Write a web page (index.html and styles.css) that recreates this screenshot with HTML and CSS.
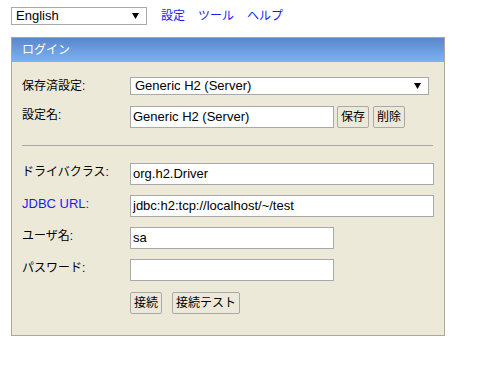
FILE: index.html
```html
<!DOCTYPE html>
<html lang="ja">
<head>
<meta charset="utf-8">
<title>H2 Console</title>
<link rel="stylesheet" href="styles.css">
</head>
<body>
<div class="page">
  <div class="topbar">
    <div class="select lang"><span class="select-text">English</span><svg class="caret" width="7" height="6" viewBox="0 0 7 6"><path d="M0 0H7L3.5 6Z"/></svg></div>
    <nav class="links">
      <a href="#" class="link">設定</a>
      <a href="#" class="link">ツール</a>
      <a href="#" class="link">ヘルプ</a>
    </nav>
  </div>
  <div class="panel">
    <div class="panel-head">ログイン</div>
    <div class="panel-body">
      <div class="label">保存済設定:</div>
      <div class="field first"><div class="select saved"><span class="select-text">Generic H2 (Server)</span><svg class="caret" width="7" height="6" viewBox="0 0 7 6"><path d="M0 0H7L3.5 6Z"/></svg></div></div>

      <div class="label">設定名:</div>
      <div class="field inline"><div class="input short">Generic H2 (Server)</div><button class="btn">保存</button><button class="btn">削除</button></div>

      <div class="sep"></div>

      <div class="label">ドライバクラス:</div>
      <div class="field"><div class="input long">org.h2.Driver</div></div>

      <div class="label jdbc">JDBC URL:</div>
      <div class="field"><div class="input long">jdbc:h2:tcp://localhost/~/test</div></div>

      <div class="label">ユーザ名:</div>
      <div class="field"><div class="input short">sa</div></div>

      <div class="label">パスワード:</div>
      <div class="field"><div class="input short"></div></div>

      <div class="label"></div>
      <div class="field actions"><button class="btn">接続</button><button class="btn">接続テスト</button></div>
    </div>
  </div>
</div>
</body>
</html>
```
FILE: styles.css
```css
html, body {
  margin: 0;
  padding: 0;
  background: #ffffff;
}
body {
  font-family: "Liberation Sans", Arial, "Noto Sans CJK JP", sans-serif;
  font-size: 12px;
  color: #000;
}
.page {
  padding: 7px 0 0 11px;
  width: 434px;
}
.topbar {
  display: flex;
  align-items: center;
  height: 18px;
}
.select {
  box-sizing: border-box;
  display: flex;
  align-items: center;
  justify-content: space-between;
  background: #fff;
  border: 1px solid #a9a9a9;
  height: 18px;
  padding: 0 7px 0 4px;
  line-height: 16px;
}
.select-text {
  font-size: 13px;
}
.lang {
  width: 136px;
  padding-left: 4px;
}
.caret {
  display: block;
  fill: #000;
}
.links {
  display: flex;
  margin-left: 14px;
  gap: 13px;
}
.link {
  color: #1a1aff;
  text-decoration: none;
  line-height: 18px;
}
.panel {
  margin-top: 12px;
  border: 1px solid #aca899;
  background: #ece9d8;
}
.panel-head {
  height: 24px;
  line-height: 24px;
  padding-left: 10px;
  color: #fff;
  background: linear-gradient(#5a86cc, #7bb3f3);
}
.panel-body {
  display: grid;
  grid-template-columns: 108px 1fr;
  row-gap: 10px;
  padding: 15px 10px 21px 10px;
}
.label {
  line-height: 16px;
  padding-top: 1px;
}
.jdbc {
  color: #1a1aff;
  font-size: 13px;
}
.field {
  display: flex;
  align-items: center;
}
.field.first {
  margin-bottom: 1px;
}
.saved {
  width: 299px;
}
.input {
  box-sizing: border-box;
  height: 22px;
  line-height: 20px;
  border: 1px solid #a9a9a9;
  background: #fff;
  padding: 0 2px;
  white-space: nowrap;
  font-size: 13px;
}
.short {
  width: 204px;
}
.long {
  width: 304px;
}
.inline .btn:first-of-type {
  margin-left: 3px;
}
.inline .btn + .btn {
  margin-left: 4px;
}
.btn {
  box-sizing: border-box;
  height: 22px;
  padding: 0 3px;
  font: inherit;
  color: #000;
  background: #ece9d8;
  border: 1px solid #a9a9a9;
  border-radius: 2px;
  line-height: 20px;
}
.actions {
  margin-top: 1px;
  gap: 10px;
}
.sep {
  grid-column: 1 / -1;
  height: 1px;
  background: #a9a9a9;
  margin: 7px 1px 7px 0;
}
```
